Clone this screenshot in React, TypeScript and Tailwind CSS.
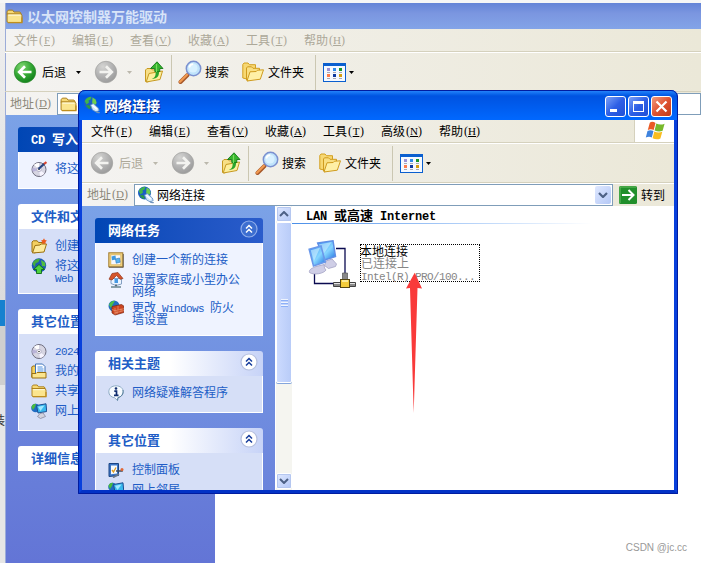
import type { ReactNode } from "react";
import clsx from "clsx";

// CJK glyphs are full width, latin ones take exactly half of that
function Txt({ children, bold }: { children: string; bold?: boolean }) {
  const parts = children.split(/([\x20-\x7e]+)/).filter(Boolean);
  return (
    <>
      {parts.map((part, i) =>
        /^[\x20-\x7e]/.test(part) ? (
          <span
            key={i}
            className={clsx(
              "whitespace-pre font-['Liberation_Mono',monospace]",
              bold ? "text-[12px] tracking-[-0.2px]" : "text-[11px] tracking-[-0.6px]"
            )}
          >
            {part}
          </span>
        ) : (
          <span key={i}>{part}</span>
        )
      )}
    </>
  );
}

// Access key in brackets, one half-width cell for each character
function AccessKey({ children }: { children: string }) {
  return (
    <span className="flex font-['Liberation_Serif',serif] text-[12px]">
      <span className="w-1.5 text-center">(</span>
      <span className="flex w-1.5 justify-center text-[11px] underline">{children}</span>
      <span className="w-1.5 text-center">)</span>
    </span>
  );
}

/* ---------- icons ---------- */

function FolderIcon({ className = "size-4" }: { className?: string }) {
  return (
    <svg viewBox="0 0 16 16" className={className}>
      <path d="M1 3.5 2.2 2h4L7.5 3.8h5.6L14 5v1H1z" fill="#f6d874" stroke="#a87b14" strokeWidth=".9" />
      <path d="M1 13V5.5h13L15 7v6.6H2z" fill="#fbe58e" stroke="#a87b14" strokeWidth=".9" />
      <path d="M2.2 6.7h11.5" stroke="#fffbe0" />
      <path d="M2 13.7h13V9" fill="none" stroke="#c08e1c" strokeWidth="1.2" />
    </svg>
  );
}

function NetGlobeIcon({ className = "size-[18px]" }: { className?: string }) {
  return (
    <svg viewBox="0 0 18 18" className={className}>
      <circle cx="7.5" cy="7" r="6.5" fill="#1b5fc4" />
      <path d="M1.8 5C3 2 6 .8 8.5.8l-1 2.7-2 1 .5 2-2.5 2z" fill="#3fb54a" />
      <path d="M9.5 1.5 12.6 3.600l1 3.400-2 2.600-2.400-2.300z" fill="#6ed04c" />
      <path d="M2.500 9.500 6 9l2 3-2 1z" fill="#2b9b42" />
      <path d="m7.5 9 2.8-1.4 5 4.400.9 2.600-3 1.300-3.700-2z" fill="#d0e6fa" stroke="#5d8bbf" strokeWidth=".8" />
      <path d="m9.300 9.300 4.500 4" stroke="#fff" strokeWidth="1.4" />
      <path d="M13 15.500c1.500 1.700 3 .8 3.800 1.200" fill="none" stroke="#6f93bd" strokeWidth="1.2" />
    </svg>
  );
}

function NavCircle({ dir, green }: { dir: "back" | "forward"; green?: boolean }) {
  const id = `nav-${dir}-${green ? "g" : "d"}`;
  return (
    <svg viewBox="0 0 24 24" className="size-6 shrink-0">
      <defs>
        <radialGradient id={id} cx=".35" cy=".25" r=".85">
          <stop offset="0" stopColor={green ? "#7fd670" : "#d4d4d2"} />
          <stop offset=".5" stopColor={green ? "#36a936" : "#b4b4b4"} />
          <stop offset="1" stopColor={green ? "#0b7a16" : "#969696"} />
        </radialGradient>
      </defs>
      <circle cx="12" cy="12" r="10.700" fill={`url(#${id})`} stroke={green ? "#2b8a2b" : "#a4a4a2"} strokeWidth=".8" />
      <path
        d={dir === "back" ? "M18.500 12H6.500M12 6.200 6.200 12l5.800 5.800" : "M5.500 12h12M12 6.200 17.800 12 12 17.800"}
        fill="none"
        stroke={green ? "#fff" : "#f3f3f0"}
        strokeWidth="2.7"
      />
    </svg>
  );
}

function Caret({ dim }: { dim?: boolean }) {
  return (
    <svg viewBox="0 0 5 3" className="h-[3px] w-[5px] shrink-0">
      <path d="M0 0h5L2.5 3z" fill={dim ? "#bbb8ac" : "#000"} />
    </svg>
  );
}

function FolderUpIcon() {
  return (
    <svg viewBox="0 0 20 22" className="h-[22px] w-5 shrink-0">
      <path d="M1.5 9 3 7.5h4L8.5 9 15 8.200V12L4 21l-2.5-.5z" fill="#f7df86" stroke="#c79a22" />
      <path d="M2.200 21 5 12.500 18.500 10 16 18.500z" fill="#fdee9c" stroke="#c79a22" />
      <path d="M7.500 18c4-1 4.500-4 4-9.500H15c.5 6-1 9.500-7.500 9.500z" fill="#2ba52b" />
      <path d="M13 .8 19 7.500h-3.200v3h-5v-3H6.500z" fill="#37b52f" stroke="#157a17" strokeWidth=".9" />
      <path d="M12.500 3v8" stroke="#7bdc60" strokeWidth="1.2" />
    </svg>
  );
}

function SearchIcon() {
  return (
    <svg viewBox="0 0 24 24" className="size-6 shrink-0">
      <path d="m9.500 15-7 7" stroke="#a7592b" strokeWidth="4" strokeLinecap="round" />
      <path d="m9 14.800-7 7" stroke="#f19a51" strokeWidth="2.2" strokeLinecap="round" />
      <circle cx="15.500" cy="8.500" r="7.200" fill="#bfe3fb" stroke="#7b90cf" strokeWidth="1.5" />
      <circle cx="15" cy="8" r="4.600" fill="#d9f1ff" />
      <path d="M11.200 7.500c.4-2.200 2-3.300 4-3.300" fill="none" stroke="#fff" strokeWidth="1.8" />
    </svg>
  );
}

function FoldersIcon() {
  return (
    <svg viewBox="0 0 22 20" className="h-5 w-[22px] shrink-0">
      <path d="M.8 16V2.500L2 1h4l1.500 1.700h6V9L5 17z" fill="#f7d873" stroke="#d3a021" />
      <path d="M4.500 18V6l1-1.200h4L11 6.300h6.500V9L6 19z" fill="#f9df82" stroke="#cf9b1e" />
      <path d="M5 19 8 9.800l6.200-.3L15.500 8.200l6-.4-3.200 9.400z" fill="#fff0a6" stroke="#cf9b1e" />
    </svg>
  );
}

function ViewsIcon() {
  const cells = [
    [4, 5, "#9c92d4"], [10, 5, "#2f8bea"], [16, 5, "#18962b"],
    [4, 11, "#ff7d4d"], [10, 11, "#0d389e"], [16, 11, "#d69e10"],
  ] as const;
  return (
    <svg viewBox="0 0 23 19" className="h-[19px] w-[23px] shrink-0" shapeRendering="crispEdges">
      <rect width="23" height="19" fill="#0a5fcf" />
      <rect x="1" y="3" width="21" height="15" fill="#f5f9ff" />
      {cells.map(([x, y, fill]) => (
        <g key={`${x}-${y}`}>
          <rect x={x} y={y} width="3" height="3" fill={fill} />
          <rect x={x} y={y + 4} width="3" height="1" fill="#a7aab3" />
        </g>
      ))}
    </svg>
  );
}

function WindowsFlag() {
  return (
    <svg viewBox="0 0 20 19" className="mt-px h-[19px] w-5">
      <path d="M4.800 1.800C6.500.3 8.500.8 10.500 2L8.700 9C6.800 7.900 4.800 7.900 2.800 8.900z" fill="#ea5a25" />
      <path d="M11.300 2.500c2.300 1.200 5.300 1.500 8.300.2l-2 7c-2.500 1.200-5.200 1-8-.3z" fill="#78b92c" />
      <path d="M2.500 9.900c2-1 4-1 6 0L6.800 16.500C5 15.500 3 15.500.8 16.600z" fill="#3e83de" />
      <path d="M9.300 10.400c2.600 1.300 5.400 1.500 8 .3l-1.900 6.800c-2.600 1.300-5.300 1-7.800-.3z" fill="#f9bd1f" />
    </svg>
  );
}

function DiscIcon({ pen }: { pen?: boolean }) {
  return (
    <svg viewBox="0 0 16 16" className="size-4">
      <circle cx="8" cy="8.500" r="7" fill="#d6d5e2" stroke="#6f6e7f" />
      <path d="M8 8.500 3 3.800A7 7 0 0 1 8 2z" fill="#fff" />
      <path d="m8 8.500 5.500 4A7 7 0 0 1 9 15z" fill="#f7f5ff" />
      <path d="M8 8.500 1.800 11A7 7 0 0 1 1.500 6.500z" fill="#b9b3d8" />
      <circle cx="8" cy="8.500" r="2.200" fill="#fff" stroke="#a9a6bf" strokeWidth=".8" />
      <circle cx="8" cy="8.500" r=".8" fill="#333" />
      {pen && (
        <>
          <path d="m7.500 8 6-5.500" stroke="#26437e" strokeWidth="2.2" />
          <path d="m13 3 2.500-2" stroke="#d9442b" strokeWidth="2.2" />
        </>
      )}
    </svg>
  );
}

function NewFolderIcon() {
  return (
    <svg viewBox="0 0 16 16" className="size-4">
      <path d="M1 14V4l1.200-1.200h4L7.500 4.500H13V8L4 15z" fill="#f4d060" stroke="#9b7110" />
      <path d="M1.500 15 4 7.500l5-.5L10 6h5.500L13 14z" fill="#fdeb9e" stroke="#9b7110" />
      <path d="m13 .2.900 1.900 2 .5-1.400 1.400.2 2L13 5.200l-2 .8.300-2L10 2.600l2-.5z" fill="#ee5a1c" />
    </svg>
  );
}

function PublishIcon() {
  return (
    <svg viewBox="0 0 16 16" className="size-4">
      <circle cx="8" cy="7.500" r="7.200" fill="#1d58b5" />
      <path d="M1.500 6C2.500 2 6 .5 9 .7L7.500 4 4.500 5.500 4 9z" fill="#44ad3d" />
      <path d="m10 2 4 2.500.5 4L11 8z" fill="#4fbf40" />
      <path d="m8 6.500 5.500 5h-3v4h-5v-4h-3z" fill="#4ed23f" stroke="#0e6b18" strokeWidth=".9" />
    </svg>
  );
}

function DocsIcon() {
  return (
    <svg viewBox="0 0 16 16" className="size-4">
      <path d="M.8 14V4l1-1h3v11z" fill="#f4d060" stroke="#9b7110" />
      <path d="M4.500 1h7L14 3.500V12H4.500z" fill="#fff" stroke="#3e72b8" />
      <path d="M6.500 4h5M6.500 6h6M6.500 8h6" stroke="#4b8fe0" />
      <path d="M1 15v-4.500h4l1-1h9V15z" fill="#fbe58e" stroke="#9b7110" />
    </svg>
  );
}

function NeighborsIcon() {
  return (
    <svg viewBox="0 0 16 16" className="size-4">
      <circle cx="4.500" cy="5" r="4.300" fill="#1f6cc2" />
      <path d="M.5 4C1 1.500 3 .7 5 .8L4 4l-2 3z" fill="#49bb3d" />
      <path d="m5.500 2.500 9.500-1.700.7 7.700L7 10z" fill="#38b8ee" stroke="#1d4e92" />
      <path d="m7 3.700 6.500-1.200-4 5.500z" fill="#9fe8ff" />
      <path d="m9 10.500 3-.6 2.500 3.600-5 2-3-2z" fill="#d2d3de" stroke="#8789a0" strokeWidth=".8" />
    </svg>
  );
}

function NewConnectionIcon() {
  return (
    <svg viewBox="0 0 16 16" className="size-4">
      <rect x=".8" y=".8" width="14" height="14" fill="#f3d583" stroke="#a07a2d" />
      <rect x="2.800" y="2.800" width="10" height="10" fill="#f5f8ff" stroke="#dcb55a" strokeWidth=".8" />
      <path d="m3.500 4.500 4-1 .5 4-4 .8z" fill="#3d98e3" />
      <path d="m7.500 7 4-1 .7 4.200-4 1z" fill="#58b3ef" stroke="#2d75b8" strokeWidth=".6" />
      <path d="M1 15.300h14.300V2" fill="none" stroke="#6e6553" />
    </svg>
  );
}

function HomeNetworkIcon() {
  return (
    <svg viewBox="0 0 16 16" className="size-4">
      <path d="M3 6.500h10.500V12L8 13.500l-5-2z" fill="#ecf4ff" stroke="#7896bc" strokeWidth=".9" />
      <path d="M1 7.200 4 1.500 10 .5l5 6-3 .8L8.500 3.500 4 8z" fill="#d5552b" stroke="#93351a" strokeWidth=".7" />
      <rect x="6.500" y="7" width="3.500" height="4" fill="#4799e3" />
      <path d="M8 12.500V15" stroke="#5d6d7a" strokeWidth="2" />
      <path d="M3 15h10" stroke="#7d97a2" strokeWidth="1.8" />
    </svg>
  );
}

function FirewallIcon() {
  return (
    <svg viewBox="0 0 16 16" className="size-4">
      <circle cx="6" cy="6" r="5.500" fill="#226dc0" />
      <path d="M1 5C2 2 4 .7 7 .7L5 4 3 8z" fill="#4ac047" />
      <path d="m4 6.500 9.500-2 2.300 1.500v6.500L7 15l-3-2z" fill="#ca4420" stroke="#7b2410" strokeWidth=".7" />
      <path d="m4 9.500 3 1.200 9-2M7 13l9-2.500M10 5.800v4M13 8.500v3M9 11v3M7 8v6.500" fill="none" stroke="#f2a37e" strokeWidth=".6" />
    </svg>
  );
}

function InfoIcon() {
  return (
    <svg viewBox="0 0 16 16" className="size-4">
      <path d="M8 .8c4.500 0 7.200 2.700 7.200 6 0 3-2.200 5.100-5.200 5.800L9.500 15.500 6.500 12.700C3 12.200.8 10 .8 6.800.8 3.500 3.500.8 8 .8z" fill="#f6fbff" stroke="#8eabc4" />
      <path d="M15 5c.8 4-1.800 7-5 7.600L9.500 15.500" fill="none" stroke="#577f9c" />
      <circle cx="8" cy="3.500" r="1.300" fill="#102d6f" />
      <path d="M6.300 6.200h2.200v4M6 10.300h4.500" fill="none" stroke="#102d6f" strokeWidth="1.7" />
    </svg>
  );
}

function ControlPanelIcon() {
  return (
    <svg viewBox="0 0 16 16" className="size-4">
      <path d="M1 1.500h9.500v12L1 14.500z" fill="#3d77c7" stroke="#1b4483" />
      <path d="M3 3.500h6v8l-6 .8z" fill="#f5fbff" />
      <path d="m4 8 1.500 2L8 5.500" fill="none" stroke="#e39b1d" strokeWidth="1.3" />
      <path d="M8 9h6V7.500" fill="none" stroke="#444b58" strokeWidth="1.6" />
      <circle cx="14" cy="7.500" r="1.500" fill="#e16633" />
      <path d="m5 15.500 6-3.500" stroke="#6b7788" strokeWidth="1.8" />
    </svg>
  );
}

function LanIcon() {
  return (
    <svg viewBox="0 0 48 50" className="h-[50px] w-12 shrink-0">
      <defs>
        <linearGradient id="screen" x1="0" y1="0" x2="1" y2="1">
          <stop offset="0" stopColor="#2f86f2" />
          <stop offset=".55" stopColor="#86d6ff" />
          <stop offset="1" stopColor="#1e6fe0" />
        </linearGradient>
      </defs>
      <path d="M28 8.500h9V34M6.500 34v9.500H25" fill="none" stroke="#0a0a50" strokeWidth="1.3" />
      <path d="m18 21 6-2 4.500 5-1 2.500-7 2-4-3z" fill="#cfcee6" stroke="#a3a2c4" strokeWidth=".8" />
      <path d="M9.700 3 25 .8l2.500 15.700L16.500 20z" fill="url(#screen)" stroke="#5f8fe6" strokeWidth="1.5" />
      <path d="m11 4.200 12.500-2L15 15z" fill="#c9efff" opacity=".6" />
      <path d="m8 26.500 8-2 .5 3.500 1.500 2c-2 3.500-12 5.500-16.500 2.500-1-3 3-4.500 6.500-6z" fill="#cfcee6" stroke="#a3a2c4" strokeWidth=".8" />
      <path d="M1.200 9.300 13 6l4.300 16L5.500 26z" fill="url(#screen)" stroke="#6a98ea" strokeWidth="1.600" />
      <path d="m2.700 10.300 9.300-2.600-6 13.500z" fill="#d2f2ff" opacity=".6" />
      <path d="M34.500 33h5v7h-5z" fill="#888" stroke="#555" strokeWidth=".7" />
      <path d="M25.500 42.500h8v4h-8zM41 42.500h6.500v4H41z" fill="#8a8a8a" stroke="#333" strokeWidth=".9" />
      <path d="M26 43.500h6M42 43.500h5" stroke="#e4e4e4" />
      <rect x="32.500" y="39.500" width="9" height="8" fill="#f4cc3a" stroke="#54450f" />
      <path d="M34 41h6" stroke="#fff6b4" strokeWidth="1.5" />
    </svg>
  );
}

/* ---------- explorer chrome ---------- */

function MenuBar({ items, dim, flag }: { items: string[]; dim?: boolean; flag?: boolean }) {
  return (
    <div className="flex h-[23px] shrink-0 border-b border-[#d5d1bd]">
      <div className={clsx("flex flex-1 gap-4 pl-[9px] leading-[22px]", dim ? "text-[#aca899]" : "text-black")}>
        {items.map((item) => {
          const [label, key] = item.split("|");
          return (
            <span key={item} className="flex w-[42px] whitespace-nowrap">
              {label}
              <AccessKey>{key}</AccessKey>
            </span>
          );
        })}
      </div>
      {flag && (
        <div className="flex w-10 justify-center border-l border-[#d5d1bd] bg-white">
          <WindowsFlag />
        </div>
      )}
    </div>
  );
}

function Separator() {
  return <div className="h-[35px] w-px shrink-0 bg-[#cbc7b2]" />;
}

function ToolBar({ canGoBack }: { canGoBack?: boolean }) {
  return (
    <div className="flex h-10 shrink-0 items-center border-y border-t-white border-b-[#d5d1bd] pl-2 text-black">
      <NavCircle dir="back" green={canGoBack} />
      <span className={clsx("ml-[5px] w-6", !canGoBack && "text-[#aca899]")}>后退</span>
      <span className="ml-[10px] flex"><Caret dim={!canGoBack} /></span>
      <span className="ml-[13px] flex"><NavCircle dir="forward" /></span>
      <span className="ml-[9px] flex"><Caret dim /></span>
      <span className="mr-[7px] ml-3 flex"><FolderUpIcon /></span>
      <Separator />
      <span className="ml-1.5 flex"><SearchIcon /></span>
      <span className="ml-[3px] w-6">搜索</span>
      <span className="ml-[13px] flex"><FoldersIcon /></span>
      <span className="mr-[11px] ml-1 w-9">文件夹</span>
      <Separator />
      <span className="mr-[3px] ml-[7px] flex"><ViewsIcon /></span>
      <Caret />
    </div>
  );
}

function AddressLabel() {
  return (
    <span className="flex w-[52px] shrink-0 pl-[5px] leading-5 whitespace-nowrap text-[#8b887a]">
      地址
      <AccessKey>D</AccessKey>
    </span>
  );
}

/* ---------- task pane ---------- */

function Chevrons({ primary }: { primary?: boolean }) {
  return (
    <svg viewBox="0 0 18 18" className="-mt-0.5 size-[18px] shrink-0">
      <circle cx="9" cy="9" r="8" fill={primary ? "#3c6ed0" : "#fff"} stroke={primary ? "#8fadea" : "#b5bfde"} strokeWidth="1.2" />
      <path d="m6 8.500 3-3 3 3M6 12.500l3-3 3 3" fill="none" stroke={primary ? "#fff" : "#173d9c"} strokeWidth="1.5" />
    </svg>
  );
}

type Task = { icon: ReactNode; lines: string[] };

function TaskCard({
  title,
  tasks,
  primary,
  className,
}: {
  title: string;
  tasks: Task[];
  primary?: boolean;
  className?: string;
}) {
  return (
    <section className={clsx("flex w-[168px] shrink-0 flex-col", className)}>
      <header
        className={clsx(
          "flex h-[25px] shrink-0 items-center justify-between rounded-t-[3px] bg-gradient-to-r pr-[5px] pb-px pl-[13px] text-[13px] font-bold",
          primary ? "from-[#0046b4] to-[#2a5ccb] text-white" : "from-white from-45% to-[#c7d3f7] text-[#215dc6]"
        )}
      >
        <span className="whitespace-nowrap"><Txt bold>{title}</Txt></span>
        <Chevrons primary={primary} />
      </header>
      {tasks.length > 0 && (
        <div
          className={clsx(
            "flex flex-1 flex-col gap-1 border border-t-0 border-white pt-[9px] pl-3",
            primary ? "bg-[#eff3ff]" : "bg-[#d6dff7]"
          )}
        >
          {tasks.map((task) => (
            <div key={task.lines[0]} className="flex gap-2">
              <span className="h-4 w-4 shrink-0">{task.icon}</span>
              <span className="flex flex-col text-[#215dc6]">
                {task.lines.map((line) => (
                  <span key={line} className="h-3 leading-[13px] whitespace-nowrap"><Txt>{line}</Txt></span>
                ))}
              </span>
            </div>
          ))}
        </div>
      )}
    </section>
  );
}

function ScrollArrow({ down }: { down?: boolean }) {
  return (
    <div className="flex size-4 shrink-0 items-center justify-center rounded-[2px] border border-white bg-gradient-to-br from-[#dfe8ff] to-[#b4c8f6] outline outline-[#b5c7f0] -outline-offset-2">
      <svg viewBox="0 0 10 6" className="h-1.5 w-2.5">
        <path d={down ? "m1 1 4 4 4-4" : "m1 5 4-4 4 4"} fill="none" stroke="#4d6185" strokeWidth="2" />
      </svg>
    </div>
  );
}

function ScrollBar() {
  return (
    <div className="flex w-[17px] shrink-0 flex-col border-l border-white bg-[#f5f5f0]">
      <ScrollArrow />
      <div className="flex h-[161px] w-4 flex-col items-center justify-center gap-px rounded-[2px] border border-white bg-gradient-to-r from-[#cbdafe] to-[#b9ccf8] shadow-[0_1px_0_#84a5dc]">
        <i className="h-px w-[7px] bg-[#eef4fe] shadow-[0_1px_0_#8cb0f8]" />
        <i className="mt-px h-px w-[7px] bg-[#eef4fe] shadow-[0_1px_0_#8cb0f8]" />
        <i className="mt-px h-px w-[7px] bg-[#eef4fe] shadow-[0_1px_0_#8cb0f8]" />
      </div>
      <div className="mt-auto mb-px"><ScrollArrow down /></div>
    </div>
  );
}

function TitleButton({ kind }: { kind: "min" | "max" | "close" }) {
  return (
    <button
      className={clsx(
        "size-[21px] rounded-[3px] border border-white bg-gradient-to-br",
        kind === "close" ? "from-[#f0997d] via-[#df5231] to-[#c23a16]" : "from-[#7d9ff6] via-[#2e5fe6] to-[#1f4fd6]"
      )}
    >
      <svg viewBox="0 0 19 19" className="size-[19px]" fill="none" stroke="#fff">
        {kind === "min" && <path d="M4 13.500h7" strokeWidth="3" />}
        {kind === "max" && (
          <>
            <rect x="4.500" y="4.500" width="10" height="10" />
            <path d="M4 5.500h11" strokeWidth="3" />
          </>
        )}
        {kind === "close" && <path d="m4.500 4.500 10 10m0-10-10 10" strokeWidth="2.200" />}
      </svg>
    </button>
  );
}

const baseMenu = ["文件|F", "编辑|E", "查看|V", "收藏|A", "工具|T"];

function FolderWindow() {
  return (
    <div className="flex h-[560px] min-w-0 flex-1 flex-col border-l border-[#9cacd8]">
      <div className="flex h-[26px] shrink-0 items-center gap-1 bg-gradient-to-b from-[#6484d7] via-[#7b96e0] via-40% to-[#83a4e8] text-[14px] font-bold text-[#d8e4f8]">
        <FolderIcon className="size-[17px]" />
        <span>以太网控制器万能驱动</span>
      </div>
      <div className="flex shrink-0 flex-col bg-gradient-to-r from-[#f4f3f1] to-[#ebe8d8]">
        <div className="-ml-px flex flex-col">
          <MenuBar items={[...baseMenu, "帮助|H"]} dim />
          <ToolBar canGoBack />
          <div className="flex h-[23px] pt-px">
            <AddressLabel />
            <div className="flex h-[22px] flex-1 items-center border border-[#7f9db9] bg-white pl-[2px]">
              <FolderIcon className="size-[17px]" />
            </div>
          </div>
        </div>
      </div>
      <div className="flex min-h-0 flex-1 bg-white">
        <aside className="flex w-[209px] flex-col gap-[15px] bg-gradient-to-b from-[#7ba2e7] to-[#6375d6] pt-[12px] pl-3">
          <TaskCard
            title="CD 写入任务"
            primary
            className="h-[62px]"
            tasks={[{ icon: <DiscIcon pen />, lines: ["将这些文件写入 CD"] }]}
          />
          <TaskCard
            title="文件和文件夹任务"
            className="h-[90px]"
            tasks={[
              { icon: <NewFolderIcon />, lines: ["创建一个新文件夹"] },
              { icon: <PublishIcon />, lines: ["将这个文件夹发布到", "Web"] },
            ]}
          />
          <TaskCard
            title="其它位置"
            className="h-[122px]"
            tasks={[
              { icon: <DiscIcon />, lines: ["2024"] },
              { icon: <DocsIcon />, lines: ["我的文档"] },
              { icon: <FolderIcon />, lines: ["共享文档"] },
              { icon: <NeighborsIcon />, lines: ["网上邻居"] },
            ]}
          />
          <TaskCard title="详细信息" tasks={[]} />
        </aside>
      </div>
    </div>
  );
}

function NetworkWindow() {
  return (
    <div className="absolute top-[90px] left-[78px] flex h-[404px] w-[600px] flex-col rounded-t-[7px] border-x-4 border-b-4 border-x-[#0840dc] border-b-[#0232c6] bg-[#0855dd] shadow-[inset_0_1px_0_#3b94ff] outline outline-[#001ca0] -outline-offset-1">
      <div className="-mx-[3px] flex h-[30px] shrink-0 items-center rounded-t-[6px] bg-gradient-to-b from-[#2a8bff] via-[#0053e1] via-20% to-[#0068ff] pr-[5px] pl-1 text-[14px] font-bold text-white">
        <NetGlobeIcon />
        <span className="ml-[3px] flex-1 [text-shadow:1px_1px_0_#0a2a86]">网络连接</span>
        <div className="flex gap-0.5 pt-[3px]">
          <TitleButton kind="min" />
          <TitleButton kind="max" />
          <TitleButton kind="close" />
        </div>
      </div>

      <div className="flex shrink-0 flex-col bg-gradient-to-r from-[#f4f3f1] to-[#ebe8d8]">
        <MenuBar items={[...baseMenu, "高级|N", "帮助|H"]} flag />
        <ToolBar />
        <div className="flex h-[23px] border-t border-white">
          <AddressLabel />
          <div className="flex h-[22px] w-[479px] items-center border border-[#7f9db9] bg-white pr-px pl-[2px] text-black">
            <NetGlobeIcon />
            <span className="ml-0.5 flex-1">网络连接</span>
            <div className="flex h-[18px] w-4 items-center justify-center rounded-[2px] bg-gradient-to-br from-[#dfe8ff] to-[#b4c8f6]">
              <svg viewBox="0 0 10 6" className="h-1.5 w-2.5">
                <path d="m1 1 4 4 4-4" fill="none" stroke="#4d6185" strokeWidth="2.2" />
              </svg>
            </div>
          </div>
          <svg viewBox="0 0 18 18" className="mt-[2px] ml-1.5 size-[18px]">
            <rect width="18" height="18" rx="1.500" fill="#218f2b" />
            <path d="M1 17V1h16" fill="none" stroke="#69bd62" />
            <path d="M3 9h11M9.500 4 14.500 9l-5 5" fill="none" stroke="#fff" strokeWidth="2" />
          </svg>
          <span className="ml-1 leading-[21px] text-black">转到</span>
        </div>
      </div>

      <div className="flex min-h-0 flex-1 bg-white">
        <aside className="flex w-[193px] shrink-0 flex-col gap-[15px] overflow-hidden bg-gradient-to-b from-[#7ba2e7] to-[#6b84dc] pt-3 pl-[13px]">
          <TaskCard
            title="网络任务"
            primary
            className="h-[118px]"
            tasks={[
              { icon: <NewConnectionIcon />, lines: ["创建一个新的连接"] },
              { icon: <HomeNetworkIcon />, lines: ["设置家庭或小型办公", "网络"] },
              { icon: <FirewallIcon />, lines: ["更改 Windows 防火", "墙设置"] },
            ]}
          />
          <TaskCard
            title="相关主题"
            className="h-[62px]"
            tasks={[{ icon: <InfoIcon />, lines: ["网络疑难解答程序"] }]}
          />
          <TaskCard
            title="其它位置"
            className="h-[122px]"
            tasks={[
              { icon: <ControlPanelIcon />, lines: ["控制面板"] },
              { icon: <NeighborsIcon />, lines: ["网上邻居"] },
            ]}
          />
        </aside>
        <ScrollBar />
        <main className="flex-1">
          <h2 className="h-[17px] pl-3.5 text-[13px] leading-[17px] font-bold text-black"><Txt bold>LAN 或高速 Internet</Txt></h2>
          <div className="h-px w-[300px] bg-gradient-to-r from-[#4a8fe8] to-white" />
          <div className="mt-4 ml-4 flex items-start gap-1">
            <LanIcon />
            <div className="mt-1 flex h-[38px] w-[120px] flex-col border border-dotted border-black text-[#868686]">
              <span className="-ml-px h-3 leading-3 text-black">本地连接</span>
              <span className="h-3 leading-3">已连接上</span>
              <span className="h-3 leading-3 whitespace-nowrap"><Txt>Intel(R) PRO/100...</Txt></span>
            </div>
          </div>
        </main>
      </div>
    </div>
  );
}

export default function App() {
  return (
    <div className="relative flex h-[563px] w-[701px] overflow-hidden bg-[#f6f6f6] pt-[3px] font-['Noto_Sans_CJK_SC',sans-serif] text-[12px]">
      {/* Strip of the page behind the windows */}
      <div className="flex w-[5px] shrink-0 flex-col overflow-hidden bg-[#e6e6e6]">
        <div className="h-[297px] shrink-0 bg-gradient-to-b from-[#f0f0f0] to-[#dcdcdc]" />
        <div className="h-[26px] shrink-0 bg-[#1681cf]" />
        <div className="h-[59px] shrink-0 bg-[#cfcfcf]" />
        <span className="mt-[26px] -ml-[7px] w-3 text-[#333]">装</span>
      </div>

      <FolderWindow />
      <NetworkWindow />

      {/* Pointer to the connection */}
      <svg viewBox="0 0 16 141" className="absolute top-[272px] left-[406px] h-[141px] w-4">
        <path d="M8.700.7 16 16.500l-4.500-.6L7.700 141 4 15.900l-4 .6z" fill="#f93a3a" />
      </svg>

      <span className="absolute right-[14px] bottom-[7px] font-['Liberation_Sans',sans-serif] text-[10px] leading-4 text-[#999]">
        CSDN @jc.cc
      </span>
    </div>
  );
}
